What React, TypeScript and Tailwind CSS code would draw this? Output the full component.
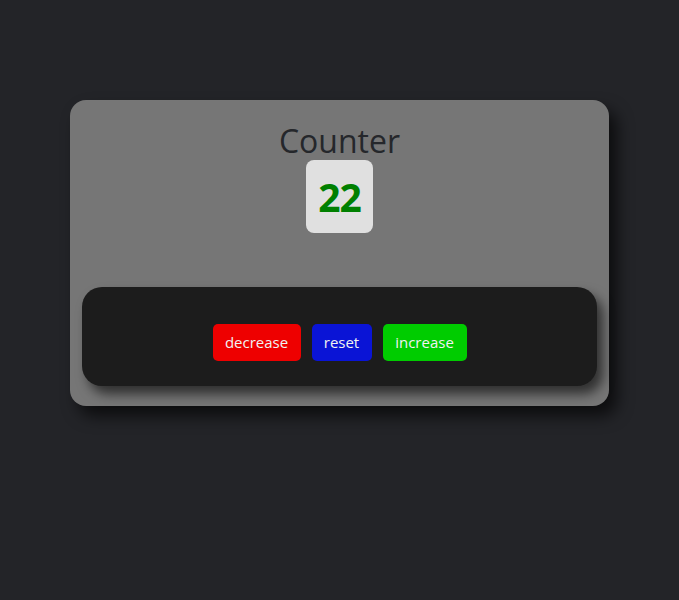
export default function App() {
  return (
    <div className="min-h-screen w-full bg-[#232428] pt-[100px] font-['Segoe_UI','Open_Sans',sans-serif]">
      <div className="mx-auto flex w-[539px] flex-col items-center rounded-[16px] bg-[#767676] px-[12px] pt-[22px] pb-[20px] shadow-[8px_10px_16px_rgba(0,0,0,0.65)]">
        <h1 className="text-[32px] font-medium leading-[38px] text-[#25272b]">Counter</h1>
        <div className="flex h-[73px] w-[67px] items-center justify-center rounded-[8px] bg-[#e0e0e0]">
          <span className="text-[39px] font-bold leading-none tracking-[-1px] text-[#008000]">22</span>
        </div>
        <div className="mt-[54px] flex h-[99px] w-full justify-center gap-[11px] rounded-[20px] bg-[#1c1c1c] pt-[37px] shadow-[6px_8px_12px_rgba(0,0,0,0.6)]">
          <button className="flex h-[37px] w-[88px] items-center justify-center rounded-[5px] bg-[#ee0000] text-[15px] text-[#f2f2f2]">
            decrease
          </button>
          <button className="flex h-[37px] w-[60px] items-center justify-center rounded-[5px] bg-[#0a14d6] text-[15px] text-[#f2f2f2]">
            reset
          </button>
          <button className="flex h-[37px] w-[84px] items-center justify-center rounded-[5px] bg-[#00cc00] text-[15px] text-[#f2f2f2]">
            increase
          </button>
        </div>
      </div>
    </div>
  );
}
